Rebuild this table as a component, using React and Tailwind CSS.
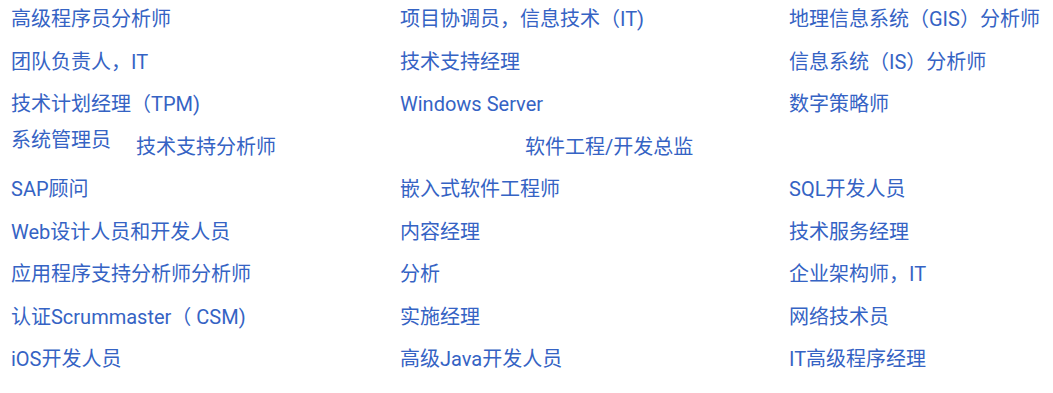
const rows = [
  ["高级程序员分析师", "项目协调员，信息技术（IT)", "地理信息系统（GIS）分析师"],
  ["团队负责人，IT", "技术支持经理", "信息系统（IS）分析师"],
  ["技术计划经理（TPM)", "Windows Server", "数字策略师"],
  null,
  ["SAP顾问", "嵌入式软件工程师", "SQL开发人员"],
  ["Web设计人员和开发人员", "内容经理", "技术服务经理"],
  ["应用程序支持分析师分析师", "分析", "企业架构师，IT"],
  ["认证Scrummaster（ CSM)", "实施经理", "网络技术员"],
  ["iOS开发人员", "高级Java开发人员", "IT高级程序经理"],
];

export default function App() {
  return (
    <div
      className="w-[1053px] h-[393px] overflow-hidden bg-white text-[#3563c4] text-[20px] leading-[28px]"
      style={{ fontFamily: 'Roboto, "Noto Sans CJK SC", sans-serif' }}
    >
      <div className="pl-[11px] flex flex-col">
        {rows.map((r, i) =>
          r ? (
            <div key={i} className="flex h-[42.5px] pt-[5px]">
              <div className="w-[389px] shrink-0 whitespace-nowrap">{r[0]}</div>
              <div className="w-[389px] shrink-0 whitespace-nowrap">{r[1]}</div>
              <div className="whitespace-nowrap">{r[2]}</div>
            </div>
          ) : (
            <div key={i} className="flex h-[42.5px]">
              <div className="w-[125px] shrink-0 whitespace-nowrap mt-[-2px]">系统管理员</div>
              <div className="w-[389px] shrink-0 whitespace-nowrap pt-[5px]">技术支持分析师</div>
              <div className="whitespace-nowrap pt-[5px]">软件工程/开发总监</div>
            </div>
          )
        )}
      </div>
    </div>
  );
}
